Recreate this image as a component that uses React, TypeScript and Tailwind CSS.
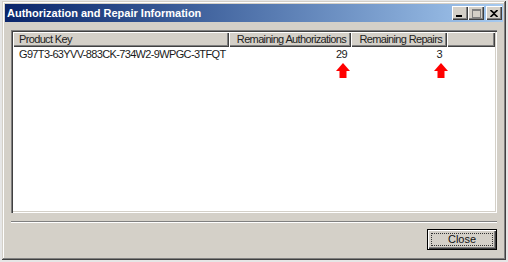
import React from 'react';

const font = { fontFamily: '"Liberation Sans", Arial, sans-serif' };

const Arrow: React.FC = () => (
  <svg width="14" height="15" viewBox="0 0 14 15">
    <path d="M7 0 L14 8 L10.5 8 L10.5 15 L3.5 15 L3.5 8 L0 8 Z" fill="#ff0000" />
  </svg>
);

const TitleButton: React.FC<{ children: React.ReactNode; className?: string }> = ({ children, className }) => (
  <div
    className={`w-[16px] h-[14px] bg-[#d4d0c8] flex items-center justify-center shadow-[inset_1px_1px_#fff,inset_-1px_-1px_#404040,inset_-2px_-2px_#808080] ${className ?? ''}`}
  >
    {children}
  </div>
);

const HeaderCell: React.FC<{ w: string; right?: boolean; children?: React.ReactNode }> = ({ w, right, children }) => (
  <div
    className={`${w} h-full shrink-0 flex items-center bg-[#d4d0c8] shadow-[inset_1px_1px_#fff,inset_-1px_-1px_#404040,inset_-2px_-2px_#808080] ${
      right ? 'justify-end pr-[5px]' : 'pl-[6px]'
    }`}
  >
    {children}
  </div>
);

export default function App() {
  return (
    <div className="w-[508px] h-[262px] bg-[#e6e6e6] pt-[1px] pl-[2px] text-[11px] tracking-[-0.65px] text-[#111]" style={font}>
      <div className="w-[504px] h-[259px] bg-[#d4d0c8] shadow-[inset_-1px_-1px_#404040,inset_1px_1px_#d4d0c8,inset_-2px_-2px_#808080,inset_2px_2px_#fff] p-[3px] flex flex-col">
        {/* Title bar */}
        <div className="h-[18px] shrink-0 flex items-center bg-gradient-to-r from-[#0a246a] to-[#a6caf0] pl-[2px] pr-[1px]">
          <span className="text-white font-bold tracking-normal leading-none">Authorization and Repair Information</span>
          <div className="ml-auto flex items-center">
            <TitleButton>
              <svg width="8" height="8" viewBox="0 0 8 8">
                <rect x="0" y="6" width="6" height="2" fill="#000" />
              </svg>
            </TitleButton>
            <TitleButton>
              <svg width="9" height="9" viewBox="0 0 9 9">
                <rect x="0.5" y="0.5" width="8" height="8" fill="none" stroke="#808080" />
                <rect x="0" y="1" width="9" height="1" fill="#808080" />
              </svg>
            </TitleButton>
            <TitleButton className="ml-[2px]">
              <svg width="8" height="7" viewBox="0 0 8 7">
                <path d="M0.5 0 L4 3.2 L7.5 0 M0.5 7 L4 3.8 L7.5 7" stroke="#000" strokeWidth="1.6" fill="none" />
              </svg>
            </TitleButton>
          </div>
        </div>

        {/* Body */}
        <div className="flex-1 flex flex-col pl-[6px] pr-[6px] pt-[8px] pb-[7px]">
          {/* List view */}
          <div className="h-[183px] shrink-0 bg-white p-[2px] shadow-[inset_1px_1px_#808080,inset_2px_2px_#404040,inset_-1px_-1px_#fff,inset_-2px_-2px_#d4d0c8] flex flex-col">
            <div className="h-[15px] shrink-0 flex leading-none text-[#222]">
              <HeaderCell w="w-[216px]">Product Key</HeaderCell>
              <HeaderCell w="w-[122px]" right>
                Remaining Authorizations
              </HeaderCell>
              <HeaderCell w="w-[96px]" right>
                Remaining Repairs
              </HeaderCell>
              <HeaderCell w="flex-1" />
            </div>
            <div className="h-[13px] mt-[1px] flex items-center leading-none text-[#1a1a1a]">
              <div className="w-[216px] pl-[6px]">G97T3-63YVV-883CK-734W2-9WPGC-3TFQT</div>
              <div className="w-[122px] pr-[4px] text-right">29</div>
              <div className="w-[96px] pr-[5px] text-right">3</div>
            </div>
            <div className="flex mt-[2px]">
              <div className="ml-[323px]">
                <Arrow />
              </div>
              <div className="ml-[84px]">
                <Arrow />
              </div>
            </div>
          </div>

          {/* Separator */}
          <div className="h-[2px] mt-[8px] shrink-0 border-t border-t-[#808080] border-b border-b-white" />

          {/* Buttons */}
          <div className="flex justify-end mt-[6px]">
            <button className="w-[70px] h-[21px] border border-black bg-[#d4d0c8] shadow-[inset_1px_1px_#fff,inset_-1px_-1px_#404040,inset_-2px_-2px_#808080] p-[3px] tracking-normal">
              <div className="h-full w-full border border-dotted border-[#333] flex items-center justify-center leading-none text-[#111]">
                Close
              </div>
            </button>
          </div>
        </div>
      </div>
    </div>
  );
}
